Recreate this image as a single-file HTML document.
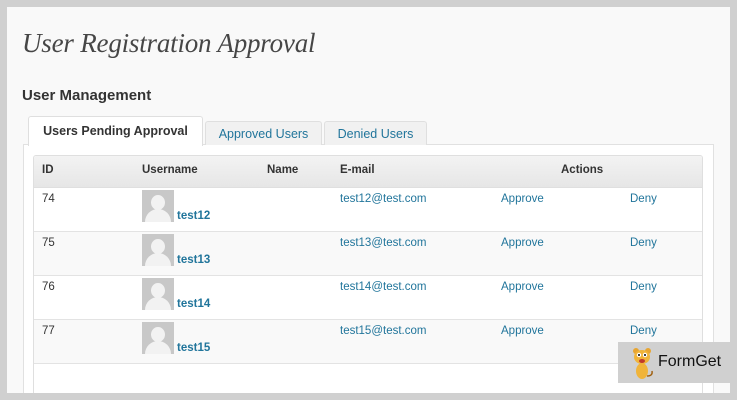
<!DOCTYPE html>
<html><head><style>
body{margin:0;width:737px;height:400px;background:#d0d0d0;overflow:hidden;font-family:"Liberation Sans",sans-serif;position:relative}
.page{position:absolute;left:7px;top:7px;width:723px;height:386px;background:#f9f9f9;overflow:hidden}
h1{position:absolute;left:15px;top:21px;margin:0;font:italic 27px "Liberation Serif",serif;color:#464646;letter-spacing:-0.2px}
h2{position:absolute;left:15px;top:80px;margin:0;font:bold 15px "Liberation Sans",sans-serif;color:#333}
.tab{position:absolute;font-size:12.5px;border:1px solid #dfdfdf;border-bottom:none;border-radius:3px 3px 0 0;box-sizing:border-box;text-align:center}
.panel{position:absolute;left:16px;top:137px;width:691px;height:260px;background:#fff;border:1px solid #e1e1e1;box-sizing:border-box}
.tbl{position:absolute;left:26px;top:148px;width:670px;height:250px;border:1px solid #dfdfdf;border-radius:3px;box-sizing:border-box;background:#fff;overflow:hidden}
.hd{height:31px;background:linear-gradient(#f3f3f3,#e6e6e6);border-bottom:1px solid #dfdfdf;position:relative;font-weight:bold;font-size:11.5px;color:#333}
.hd span,.row span{position:absolute;top:5px}
.row{height:43px;border-bottom:1px solid #e3e3e3;position:relative;font-size:11.5px;color:#333}
.row.alt{background:#f9f9f9}
a{color:#21759b;text-decoration:none}
.av{position:absolute;left:108px;top:2px;width:32px;height:32px;background:#c8c8c8;overflow:hidden}
.av:before{content:"";position:absolute;left:9px;top:5px;width:14px;height:15px;border-radius:50%;background:#f2f2f2}
.av:after{content:"";position:absolute;left:3px;top:19px;width:26px;height:20px;border-radius:13px 13px 0 0;background:#f2f2f2}
.row span.un{left:143px;top:22px;font-weight:bold;color:#21759b}
.badge{position:absolute;left:618px;top:342px;width:112px;height:41px;background:#d0d0d0}
</style></head><body>
<div class="page">
<h1>User Registration Approval</h1>
<h2>User Management</h2>
<div class="panel"></div>
<div class="tab" style="left:21px;top:109px;width:175px;height:30px;background:#fff;color:#333;font-weight:bold;padding-top:7px;z-index:2">Users Pending Approval</div>
<div class="tab" style="left:198px;top:114px;width:117px;height:24px;background:#f1f1f1;color:#21759b;padding-top:5px">Approved Users</div>
<div class="tab" style="left:317px;top:114px;width:103px;height:24px;background:#f1f1f1;color:#21759b;padding-top:5px">Denied Users</div>
<div class="tbl">
<div class="hd"><span style="left:8px;top:8px">ID</span><span style="left:108px;top:8px">Username</span><span style="left:233px;top:8px">Name</span><span style="left:306px;top:8px">E-mail</span><span style="left:527px;top:8px">Actions</span></div>
<div class="row"><span style="left:8px">74</span><div class="av"></div><span class="un">test12</span><span style="left:306px"><a>test12@test.com</a></span><span style="left:467px"><a>Approve</a></span><span style="left:596px"><a>Deny</a></span></div>
<div class="row alt"><span style="left:8px">75</span><div class="av"></div><span class="un">test13</span><span style="left:306px"><a>test13@test.com</a></span><span style="left:467px"><a>Approve</a></span><span style="left:596px"><a>Deny</a></span></div>
<div class="row"><span style="left:8px">76</span><div class="av"></div><span class="un">test14</span><span style="left:306px"><a>test14@test.com</a></span><span style="left:467px"><a>Approve</a></span><span style="left:596px"><a>Deny</a></span></div>
<div class="row alt"><span style="left:8px">77</span><div class="av"></div><span class="un">test15</span><span style="left:306px"><a>test15@test.com</a></span><span style="left:467px"><a>Approve</a></span><span style="left:596px"><a>Deny</a></span></div>
</div>
</div>
<div class="badge">
<svg width="24" height="34" style="position:absolute;left:13px;top:4px" viewBox="0 0 24 34">
<circle cx="5" cy="5" r="3" fill="#e8a530"/><circle cx="17" cy="5" r="3" fill="#e8a530"/>
<ellipse cx="11" cy="11" rx="8" ry="7" fill="#f0b43a"/>
<circle cx="8" cy="9" r="2.2" fill="#fff"/><circle cx="14" cy="9" r="2.2" fill="#fff"/>
<circle cx="8" cy="9" r="1" fill="#000"/><circle cx="14" cy="9" r="1" fill="#000"/>
<ellipse cx="11" cy="15" rx="3" ry="2" fill="#c0392b"/>
<ellipse cx="11" cy="25" rx="6" ry="8" fill="#f0b43a"/>
<path d="M16 30 Q22 30 21 25" stroke="#a06010" fill="none" stroke-width="1.5"/>
</svg>
<span style="position:absolute;left:40px;top:11px;font-size:16px;color:#111">FormGet</span>
</div>
</body></html>
